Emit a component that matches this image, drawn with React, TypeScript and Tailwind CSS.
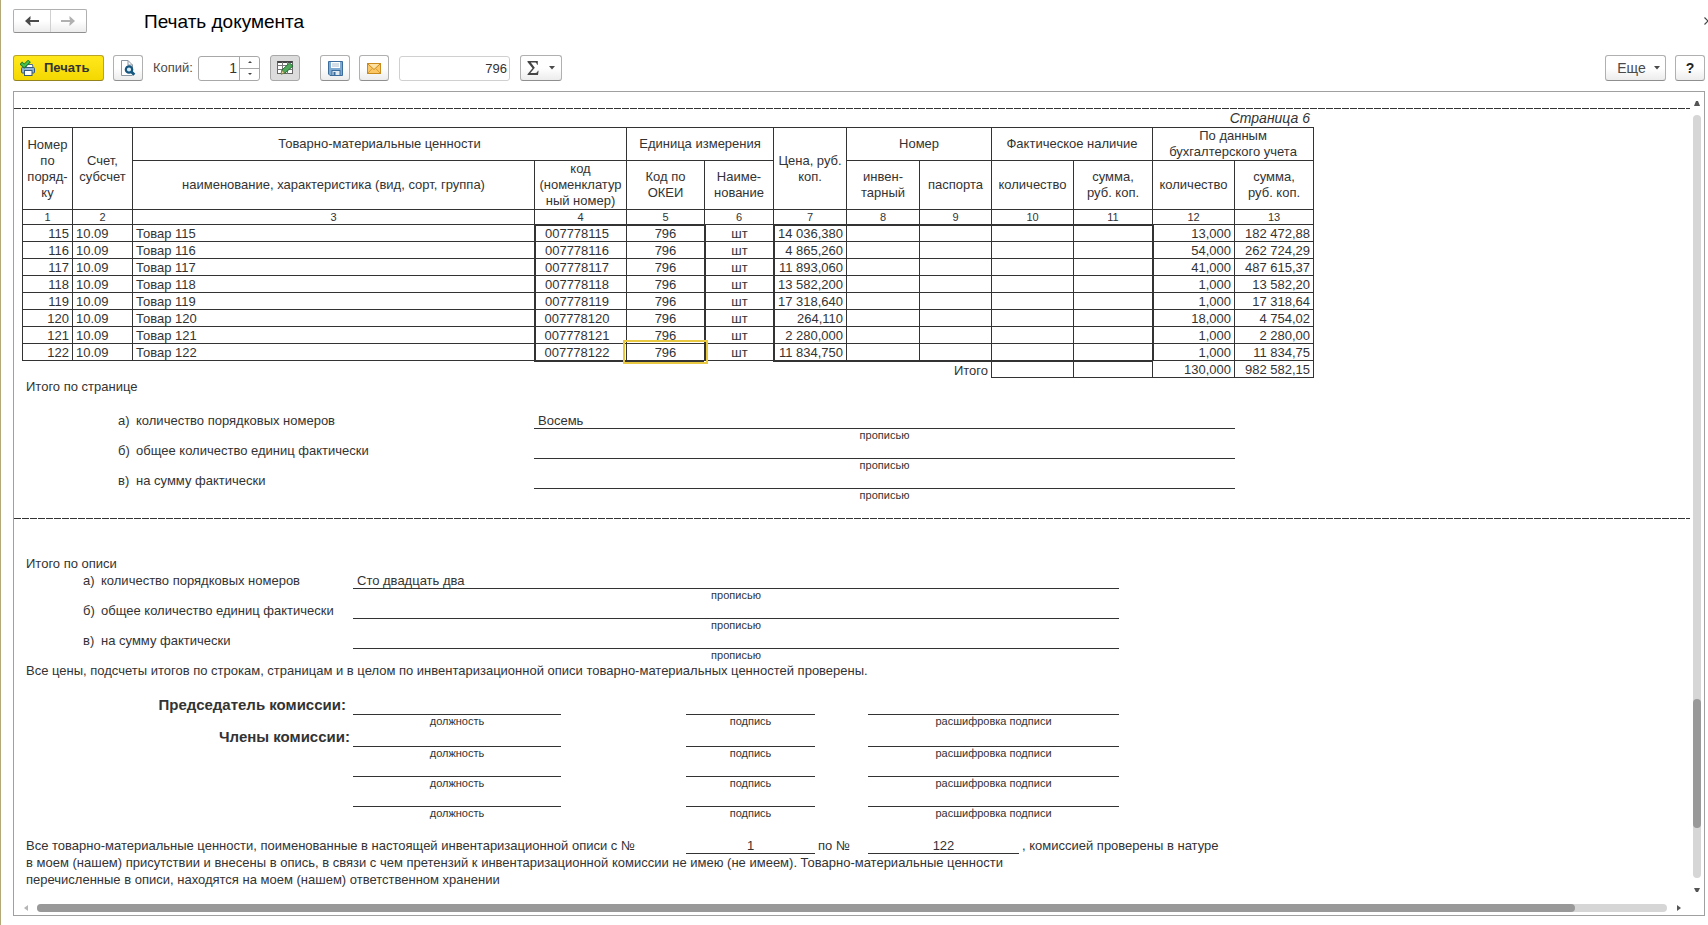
import type { ReactNode } from "react";

type Row = {
  num: number;
  code: string;
  price: string;
  qty: string;
  sum: string;
};

const ROWS: Row[] = [
  { num: 115, code: "007778115", price: "14 036,380", qty: "13,000", sum: "182 472,88" },
  { num: 116, code: "007778116", price: "4 865,260", qty: "54,000", sum: "262 724,29" },
  { num: 117, code: "007778117", price: "11 893,060", qty: "41,000", sum: "487 615,37" },
  { num: 118, code: "007778118", price: "13 582,200", qty: "1,000", sum: "13 582,20" },
  { num: 119, code: "007778119", price: "17 318,640", qty: "1,000", sum: "17 318,64" },
  { num: 120, code: "007778120", price: "264,110", qty: "18,000", sum: "4 754,02" },
  { num: 121, code: "007778121", price: "2 280,000", qty: "1,000", sum: "2 280,00" },
  { num: 122, code: "007778122", price: "11 834,750", qty: "1,000", sum: "11 834,75" },
];

const COLUMN_NUMBERS = [1, 2, 3, 4, 5, 6, 7, 8, 9, 10, 11, 12, 13];

const BUTTON =
  "flex h-[26px] shrink-0 items-center justify-center rounded-[3px] border border-[#b0b0b0] border-b-[#8f8f8f] bg-linear-to-b from-white from-50% to-[#ececec]";

const CELL = "border-l border-t border-[#333] p-0";

function PrintIcon() {
  return (
    <svg width="16" height="16" viewBox="0 0 16 16">
      <path d="M6.500 4.500h6l.5 3h-7z" fill="#fff" stroke="#4a6a8a" />
      <rect x="1.500" y="7.500" width="13" height="5.500" rx="1" fill="#8fb4d8" stroke="#35597f" />
      <rect x="4.500" y="10.500" width="7.500" height="5" fill="#fff" stroke="#35597f" />
      <path d="M.8 3 4.200 6.200 9.500 1" fill="none" stroke="#1d7a2c" strokeWidth="3.800" />
      <path d="M1.500 3.400 4.200 5.900 9 1.300" fill="none" stroke="#49c250" strokeWidth="2" />
    </svg>
  );
}

function PreviewIcon() {
  return (
    <svg width="16" height="16" viewBox="0 0 16 16">
      <path d="M12.500 15.500h-11V.5H8L12.500 5v3" fill="#fff" stroke="#8a96a2" />
      <path d="M8 .5V5h4.500" fill="none" stroke="#8a96a2" />
      <circle cx="9" cy="9.500" r="3.200" fill="#d8ecf6" stroke="#14567f" strokeWidth="2.200" />
      <path d="m11.300 11.800 3 3" stroke="#14567f" strokeWidth="2.800" />
    </svg>
  );
}

function EditTableIcon() {
  return (
    <svg width="17" height="16" viewBox="0 0 17 16">
      <rect x=".5" y="1.500" width="15" height="12" fill="#fff" stroke="#666" />
      <path d="M.5 2h15" stroke="#444" strokeWidth="2" />
      <path d="M.5 5.500h15M.5 9.500h15M5.500 2v12M10.500 2v12" stroke="#777" />
      <path d="m4 14 1-4 7.500-7 3.500 3L8 13z" fill="#4fa85a" stroke="#276d35" />
      <path d="m4 14 1-3.500 2.500 2.500z" fill="#f0d9a0" stroke="#7c6a3c" strokeWidth=".6" />
    </svg>
  );
}

function SaveIcon() {
  return (
    <svg width="15" height="15" viewBox="0 0 15 15">
      <path d="M.5.5h14v14H2L.5 13z" fill="#7ea9d0" stroke="#3c6c9c" />
      <rect x="3" y="1" width="9" height="6" fill="#fff" />
      <path d="M4 3h7M4 5h7" stroke="#a9bccd" />
      <rect x="4" y="9.500" width="8" height="5" fill="#dfe9f1" stroke="#3c6c9c" />
      <rect x="5.500" y="11" width="2" height="3" fill="#3c6c9c" />
    </svg>
  );
}

function MailIcon() {
  return (
    <svg width="14" height="11" viewBox="0 0 14 11">
      <rect x=".5" y=".5" width="13" height="10" fill="#fbc765" stroke="#c98a1e" />
      <path d="m1 1 6 5.500L13 1" fill="#fde2a4" stroke="#c98a1e" />
      <path d="m1 10 4.200-4.500M13 10 8.800 5.500" fill="none" stroke="#d89a34" />
    </svg>
  );
}

function SigmaIcon() {
  return (
    <svg width="12" height="14" viewBox="0 0 12 14">
      <path d="M.5 0h10.300v3.800H10C9.700 2.200 9 1.600 7.500 1.600H3.800l4 5.100-4.400 5.300h4.900c1.400 0 2-.7 2.500-2.200h.8L11 14H.5v-.8l5-6-5-6.300z" fill="#444" />
    </svg>
  );
}

function ArrowIcon({ flip, color }: { flip?: boolean; color: string }) {
  return (
    <svg width="14" height="10" viewBox="0 0 14 10" className={flip ? "rotate-180" : ""}>
      <path d="M14 5H3" stroke={color} strokeWidth="2" />
      <path d="M0 5 5.500 0v3L4 5l1.500 2v3z" fill={color} />
    </svg>
  );
}

function Caret() {
  return (
    <svg width="6" height="4" viewBox="0 0 6 4">
      <path d="M0 0h6L3 3.500z" fill="#4a4a4a" />
    </svg>
  );
}

function Toolbar() {
  return (
    <div className="flex h-[26px] items-center">
      <button
        type="button"
        className="flex h-[26px] w-[91px] items-center gap-2 rounded-[3px] border border-[#b9a428] border-b-[#94821a] bg-linear-to-b from-[#ffe81a] to-[#f5d800] pl-1.5 text-[13px] font-bold text-[#333]"
      >
        <PrintIcon />
        Печать
      </button>
      <button type="button" aria-label="Предварительный просмотр" className={`${BUTTON} ml-[9px] w-[30px]`}>
        <PreviewIcon />
      </button>
      <label htmlFor="copies" className="ml-2.5 w-[45px] text-[13px] text-[#4a4a4a]">
        Копий:
      </label>
      <div className="flex h-[25px] w-[62px] rounded-[3px] border border-[#a8a8a8] bg-white">
        <input
          id="copies"
          type="text"
          defaultValue="1"
          className="w-10 min-w-0 pr-0.5 text-right text-[14px] text-[#333] outline-none"
        />
        <div className="flex flex-1 flex-col border-l border-[#a8a8a8]">
          <button
            type="button"
            aria-label="Больше"
            className="flex flex-1 items-center justify-center border-b border-[#a8a8a8]"
          >
            <svg width="4" height="2" viewBox="0 0 4 2">
              <path d="M0 2h4L2 0z" fill="#444" />
            </svg>
          </button>
          <button type="button" aria-label="Меньше" className="flex flex-1 items-center justify-center">
            <svg width="4" height="2" viewBox="0 0 4 2">
              <path d="M0 0h4L2 2z" fill="#444" />
            </svg>
          </button>
        </div>
      </div>
      <button
        type="button"
        aria-label="Редактирование"
        aria-pressed="true"
        className="ml-2.5 flex h-[26px] w-[30px] items-center justify-center rounded-[3px] border border-[#a8a8a8] bg-[#dcdcdc]"
      >
        <EditTableIcon />
      </button>
      <button type="button" aria-label="Сохранить" className={`${BUTTON} ml-5 w-[30px]`}>
        <SaveIcon />
      </button>
      <button type="button" aria-label="Отправить по почте" className={`${BUTTON} ml-[9px] w-[30px]`}>
        <MailIcon />
      </button>
      <input
        type="text"
        readOnly
        aria-label="Сумма выделенных ячеек"
        value="796"
        className="ml-2.5 h-[25px] w-[111px] rounded-[3px] border border-[#d0d0d0] bg-white pr-0.5 text-right text-[13px] text-[#333] outline-none"
      />
      <button type="button" aria-label="Сумма" className={`${BUTTON} ml-2.5 w-[42px] gap-2.5`}>
        <SigmaIcon />
        <Caret />
      </button>
      <button
        type="button"
        className={`${BUTTON} ml-auto w-[61px] gap-2 pl-1.5 text-[14px] text-[#4a4a4a]`}
      >
        Еще
        <Caret />
      </button>
      <button type="button" aria-label="Справка" className={`${BUTTON} ml-[9px] w-[30px] text-[14px] font-bold text-[#222]`}>
        ?
      </button>
    </div>
  );
}

function PageBreak() {
  return (
    <div className="h-px bg-[repeating-linear-gradient(90deg,#333_0_7px,transparent_7px_8px)]" />
  );
}

function InventoryTable() {
  return (
    <table className="w-[1292px] table-fixed border-separate border-spacing-0">
      <colgroup>
        <col className="w-[50px]" />
        <col className="w-[60px]" />
        <col className="w-[402px]" />
        <col className="w-[92px]" />
        <col className="w-[78px]" />
        <col className="w-[69px]" />
        <col className="w-[73px]" />
        <col className="w-[73px]" />
        <col className="w-[72px]" />
        <col className="w-[82px]" />
        <col className="w-[79px]" />
        <col className="w-[82px]" />
        <col className="w-[80px]" />
      </colgroup>
      <thead className="leading-4 [&_th]:font-normal">
        <tr className="h-[33px]">
          <th rowSpan={2} className={CELL}>
            Номер
            <br />
            по
            <br />
            поряд-
            <br />
            ку
          </th>
          <th rowSpan={2} className={CELL}>
            Счет,
            <br />
            субсчет
          </th>
          <th colSpan={2} className={CELL}>
            Товарно-материальные ценности
          </th>
          <th colSpan={2} className={CELL}>
            Единица измерения
          </th>
          <th rowSpan={2} className={`${CELL} whitespace-nowrap`}>
            Цена, руб.
            <br />
            коп.
          </th>
          <th colSpan={2} className={CELL}>
            Номер
          </th>
          <th colSpan={2} className={CELL}>
            Фактическое наличие
          </th>
          <th colSpan={2} className={`${CELL} border-r`}>
            По данным
            <br />
            бухгалтерского учета
          </th>
        </tr>
        <tr className="h-[49px]">
          <th className={CELL}>наименование, характеристика (вид, сорт, группа)</th>
          <th className={CELL}>
            код
            <br />
            (номенклатур
            <br />
            ный номер)
          </th>
          <th className={CELL}>
            Код по
            <br />
            ОКЕИ
          </th>
          <th className={CELL}>
            Наиме-
            <br />
            нование
          </th>
          <th className={CELL}>
            инвен-
            <br />
            тарный
          </th>
          <th className={CELL}>паспорта</th>
          <th className={CELL}>количество</th>
          <th className={CELL}>
            сумма,
            <br />
            руб. коп.
          </th>
          <th className={CELL}>количество</th>
          <th className={`${CELL} border-r`}>
            сумма,
            <br />
            руб. коп.
          </th>
        </tr>
        <tr className="h-[15px] text-[11px] leading-[14px]">
          {COLUMN_NUMBERS.map((n) => (
            <th key={n} className={`${CELL} ${n === 13 ? "border-r" : ""}`}>
              {n}
            </th>
          ))}
        </tr>
      </thead>
      <tbody className="leading-[15px]">
        {ROWS.map((row, i) => {
          const top = i === 0 ? "border-t-2" : "";
          const selected = i === ROWS.length - 1;
          return (
            <tr key={row.num} className="h-[17px]">
              <td className={`${CELL} pr-[3px] text-right`}>{row.num}</td>
              <td className={`${CELL} pl-[3px]`}>10.09</td>
              <td className={`${CELL} pl-[3px]`}>Товар {row.num}</td>
              <td className={`${CELL} ${top} border-l-2 pr-2 text-center`}>{row.code}</td>
              <td className={`${CELL} ${top} relative text-center`}>
                796
                {selected && (
                  <span className="pointer-events-none absolute -inset-1 border-2 border-[#e8c840]" />
                )}
              </td>
              <td className={`${CELL} border-l-2 text-center`}>шт</td>
              <td className={`${CELL} ${top} border-l-2 pr-[3px] text-right whitespace-nowrap`}>{row.price}</td>
              <td className={`${CELL} ${top}`} />
              <td className={`${CELL} ${top}`} />
              <td className={`${CELL} ${top}`} />
              <td className={`${CELL} ${top}`} />
              <td className={`${CELL} border-l-2 pr-[3px] text-right`}>{row.qty}</td>
              <td className={`${CELL} border-r pr-[3px] text-right`}>{row.sum}</td>
            </tr>
          );
        })}
        <tr className="h-[18px]">
          <td colSpan={3} className="border-t border-[#333] p-0" />
          <td colSpan={2} className="border-t-2 border-[#333] p-0" />
          <td className="border-t border-[#333] p-0" />
          <td colSpan={3} className="border-t-2 border-[#333] p-0 pr-[3px] text-right">
            Итого
          </td>
          <td className={`${CELL} border-t-2 border-b`} />
          <td className={`${CELL} border-t-2 border-b`} />
          <td className={`${CELL} border-b pr-[3px] text-right`}>130,000</td>
          <td className={`${CELL} border-r border-b pr-[3px] text-right`}>982 582,15</td>
        </tr>
      </tbody>
    </table>
  );
}

function Line({ children, caption }: { children?: ReactNode; caption: string }) {
  return (
    <div>
      <div className="h-[17px] border-b border-[#333] pl-1">{children}</div>
      <div className="h-[13px] text-center text-[11px] leading-[13px]">{caption}</div>
    </div>
  );
}

const TOTALS = [
  { mark: "а)", label: "количество порядковых номеров" },
  { mark: "б)", label: "общее количество единиц фактически" },
  { mark: "в)", label: "на сумму фактически" },
];

function Totals({ className, first }: { className: string; first: string }) {
  return (
    <div className={`grid ${className}`}>
      {TOTALS.map((t, i) => (
        <div key={t.mark} className="contents">
          <div>{t.mark}</div>
          <div>{t.label}</div>
          <Line caption="прописью">{i === 0 ? first : null}</Line>
        </div>
      ))}
    </div>
  );
}

function Signature({ label, tall }: { label?: ReactNode; tall?: boolean }) {
  return (
    <div
      className={`grid grid-cols-[327px_208px_129px_251px] gap-x-0 ${tall ? "pt-0.5" : ""}`}
    >
      <div className="text-right text-[15px] leading-[14px] font-bold">{label}</div>
      <Line caption="должность" />
      <div className="ml-[125px] w-[129px]">
        <Line caption="подпись" />
      </div>
      <div className="ml-[178px] w-[251px]">
        <Line caption="расшифровка подписи" />
      </div>
    </div>
  );
}

function Sheet() {
  return (
    <div className="min-w-0 overflow-hidden pt-4 text-[13px] leading-[17px] text-[#333]">
      <PageBreak />
      <div className="pl-2">
        <div className="w-[1292px] pr-1 text-right text-[14px] leading-[18px] italic">Страница 6</div>
        <InventoryTable />
        <div className="pl-1">
          <div>Итого по странице</div>
          <Totals className="mt-[17px] grid-cols-[18px_398px_701px] pl-[92px]" first="Восемь" />
        </div>
      </div>
      <div className="mt-4">
        <PageBreak />
      </div>
      <div className="pt-9 pl-3">
        <div>Итого по описи</div>
        <Totals className="grid-cols-[18px_252px_766px] pl-[57px]" first="Сто двадцать два" />
        <div>
          Все цены, подсчеты итогов по строкам, страницам и в целом по инвентаризационной описи
          товарно-материальных ценностей проверены.
        </div>
        <div className="mt-[17px]">
          <Signature label={<span className="pr-[7px]">Председатель комиссии:</span>} tall />
          <Signature label={<span className="pr-[3px]">Члены комиссии:</span>} tall />
          <Signature />
          <Signature />
        </div>
        <div className="mt-[17px] grid grid-cols-[660px_129px_53px_151px_auto] whitespace-nowrap">
          <div>Все товарно-материальные ценности, поименованные в настоящей инвентаризационной описи с №</div>
          <div className="h-[17px] border-b border-[#333] text-center">1</div>
          <div className="pl-[3px]">по №</div>
          <div className="h-[17px] border-b border-[#333] text-center">122</div>
          <div className="pl-[3px]">, комиссией проверены в натуре</div>
        </div>
        <div>
          в моем (нашем) присутствии и внесены в опись, в связи с чем претензий к инвентаризационной
          комиссии не имею (не имеем). Товарно-материальные ценности
        </div>
        <div>перечисленные в описи, находятся на моем (нашем) ответственном хранении</div>
      </div>
    </div>
  );
}

function VerticalScroll() {
  return (
    <div className="flex flex-col items-center">
      <div className="flex h-[23px] items-center">
        <svg width="6" height="5" viewBox="0 0 6 5">
          <path d="M0 5 2 0h2l2 5z" fill="#555" />
        </svg>
      </div>
      <div className="flex w-2 flex-1 flex-col rounded-full bg-[#d6d6d6]">
        <div className="grow-[584]" />
        <div className="grow-[129] rounded-full bg-[#999]" />
        <div className="grow-[50]" />
      </div>
      <div className="flex h-[23px] items-center">
        <svg width="6" height="4" viewBox="0 0 6 4">
          <path d="M0 0h6L4 4H2z" fill="#555" />
        </svg>
      </div>
    </div>
  );
}

function HorizontalScroll() {
  return (
    <div className="flex h-3.5 items-center">
      <div className="flex w-[23px] justify-center">
        <svg width="4" height="6" viewBox="0 0 4 6">
          <path d="M4 0v6L0 3z" fill="#b5b5b5" />
        </svg>
      </div>
      <div className="flex h-2 flex-1 rounded-full bg-[#d6d6d6]">
        <div className="grow-[1538] rounded-full bg-[#999]" />
        <div className="grow-[92]" />
      </div>
      <div className="flex w-[23px] justify-center">
        <svg width="4" height="6" viewBox="0 0 4 6">
          <path d="M0 0v6l4-3z" fill="#555" />
        </svg>
      </div>
    </div>
  );
}

export default function App() {
  return (
    <div className="flex min-h-screen flex-col overflow-hidden border-l border-[#b5a878] bg-white pt-[9px] pb-[9px] pl-3 font-['Liberation_Sans',Arial,sans-serif]">
      <header className="flex h-6 items-center">
        <div className="flex h-6 w-[74px] rounded-[2px] border border-[#b0b0b0] border-b-[#8f8f8f] bg-linear-to-b from-white from-50% to-[#ececec]">
          <button type="button" aria-label="Назад" className="flex flex-1 items-center justify-center">
            <ArrowIcon color="#4a4a4a" />
          </button>
          <button
            type="button"
            aria-label="Вперед"
            className="flex flex-1 items-center justify-center border-l border-[#d0d0d0]"
          >
            <ArrowIcon color="#b0b0b0" flip />
          </button>
        </div>
        <h1 className="ml-[57px] pt-0.5 text-[19px] leading-6 text-black">Печать документа</h1>
        <button type="button" aria-label="Закрыть" className="-mr-1 ml-auto">
          <svg width="8" height="8" viewBox="0 0 8 8">
            <path d="m.5.5 7 7m0-7-7 7" stroke="#444" strokeWidth="1.200" />
          </svg>
        </button>
      </header>
      <div className="mt-[22px] pr-[3px]">
        <Toolbar />
      </div>
      <main className="mt-2.5 mr-[3px] grid flex-1 grid-cols-[minmax(0,1fr)_14px] grid-rows-[1fr_auto] border border-[#a0a0a0]">
        <Sheet />
        <VerticalScroll />
        <HorizontalScroll />
      </main>
    </div>
  );
}
